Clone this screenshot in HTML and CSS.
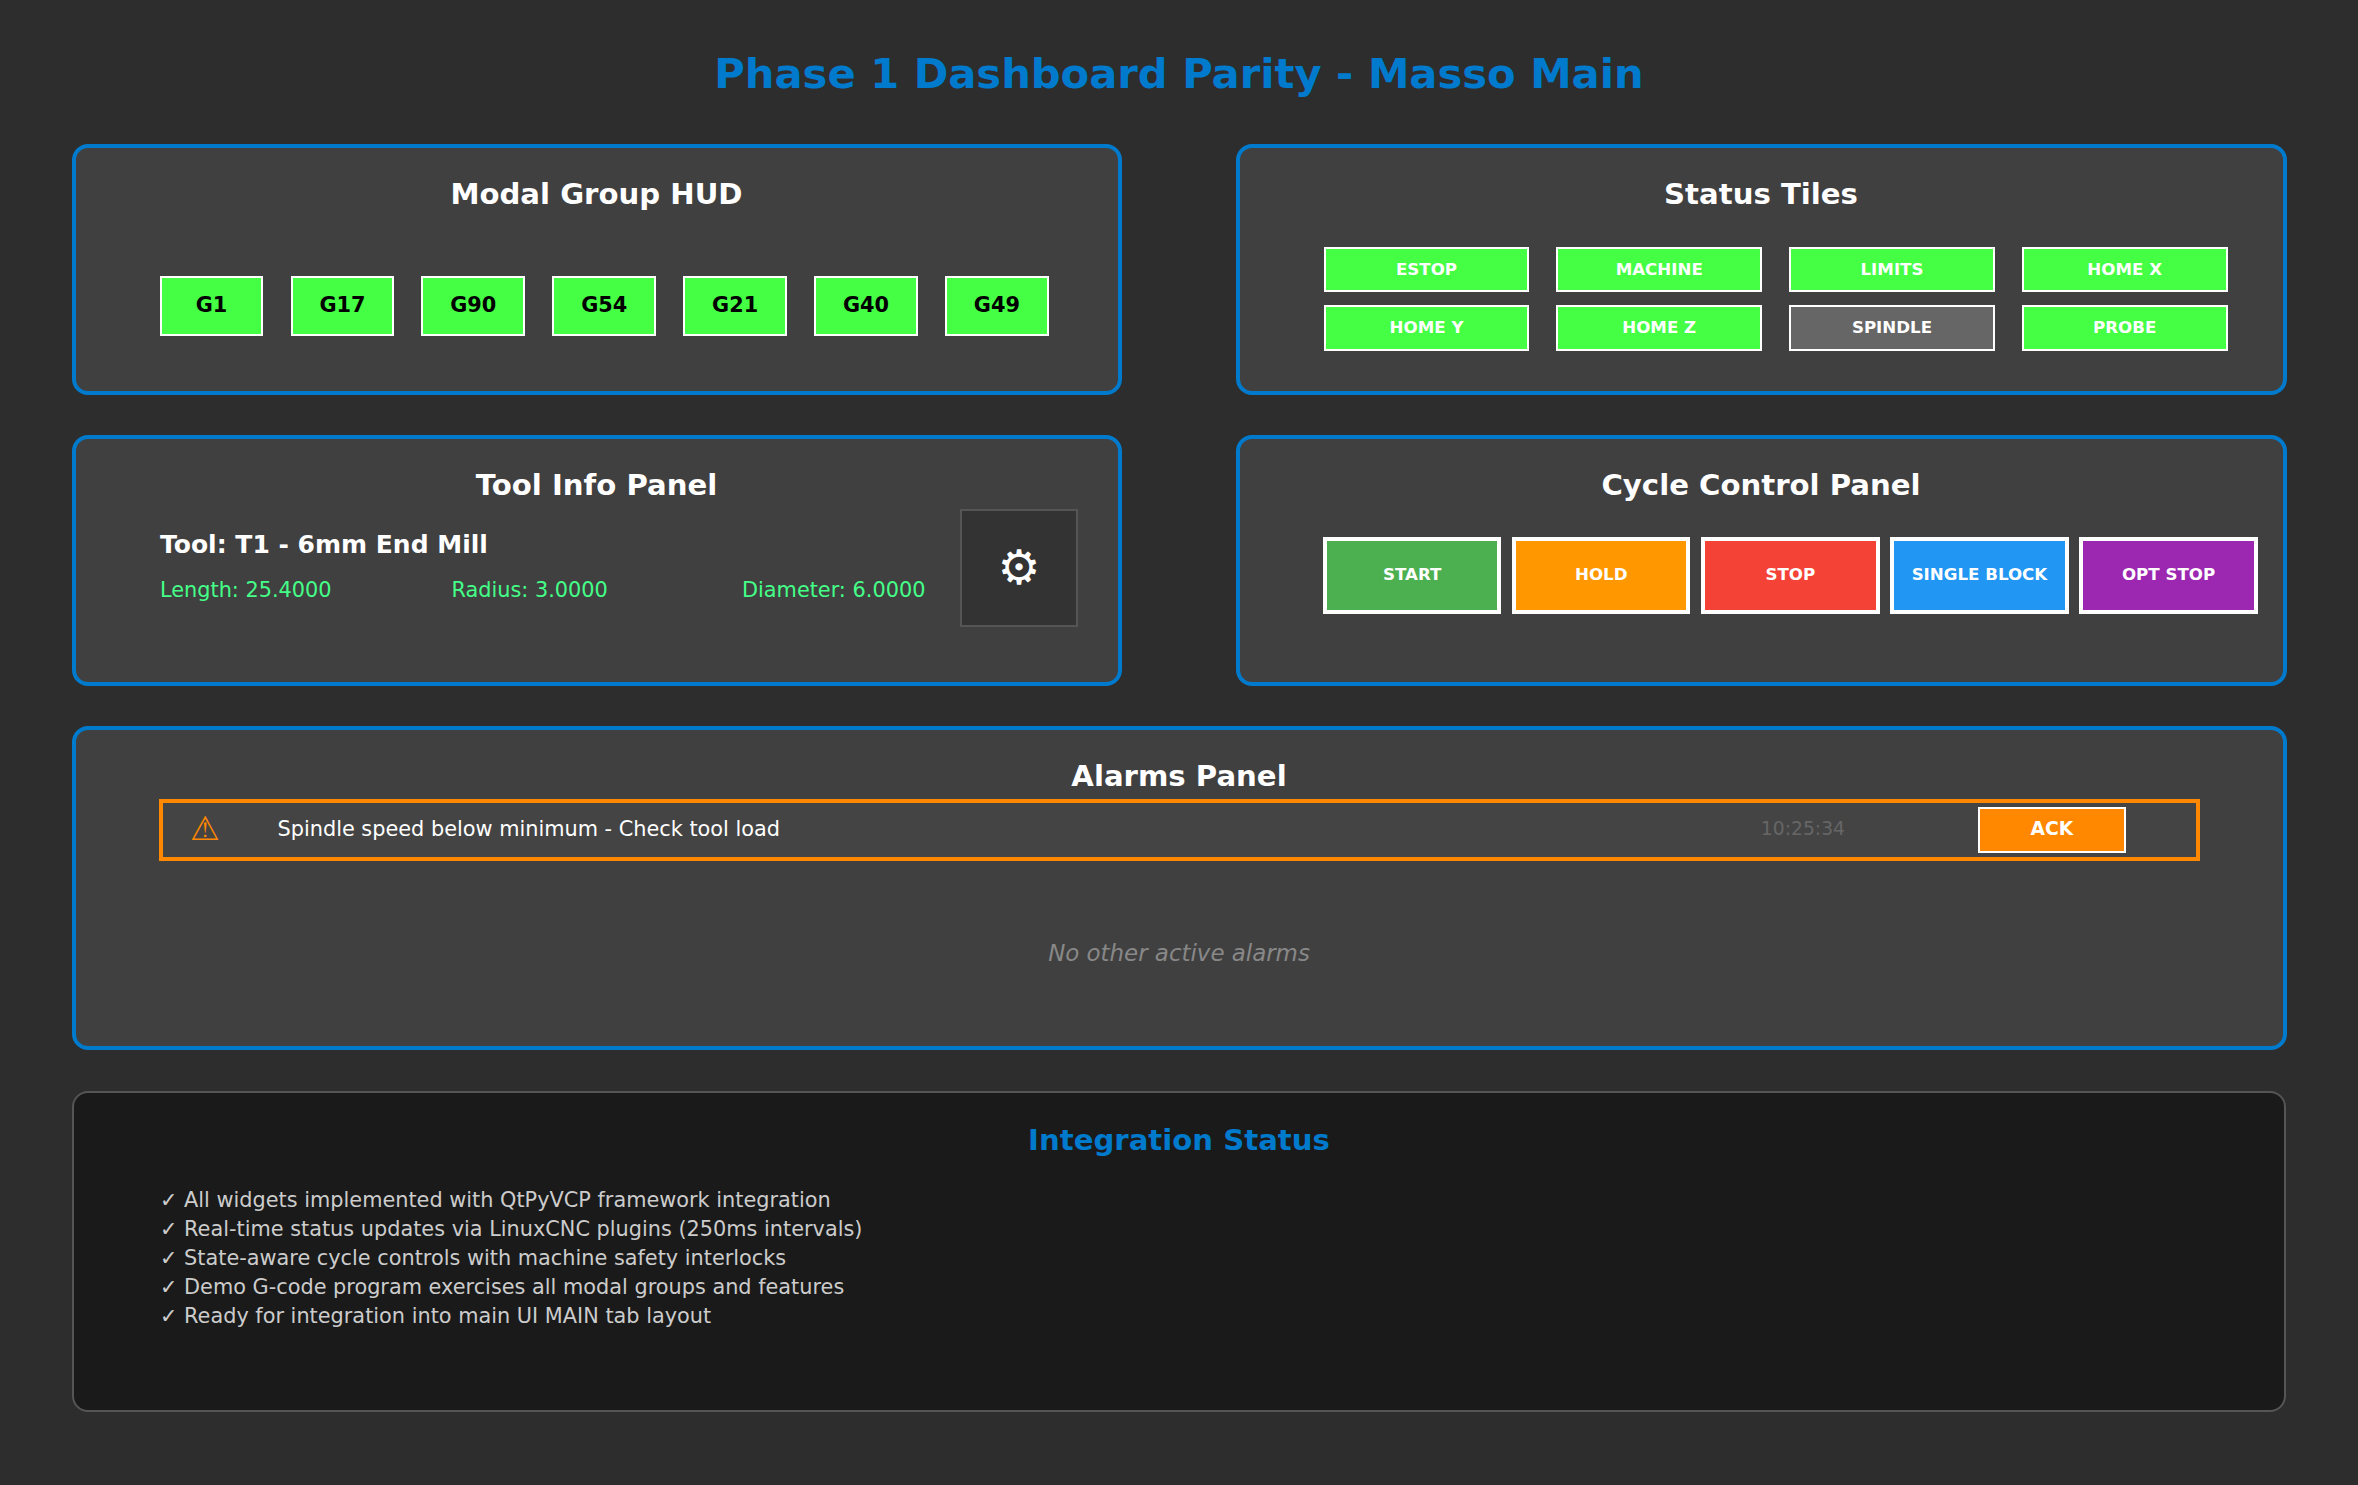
FILE: index.html
```html
<!DOCTYPE html>
<html lang="en">
<head>
<meta charset="utf-8">
<title>Phase 1 Dashboard Parity - Masso Main</title>
<link rel="stylesheet" href="styles.css">
</head>
<body>
<h1 class="page-title">Phase 1 Dashboard Parity - Masso Main</h1>
<main class="dashboard">
  <section class="panel">
    <h2 class="panel-title">Modal Group HUD</h2>
    <div class="modal-groups">
      <div class="code">G1</div>
      <div class="code">G17</div>
      <div class="code">G90</div>
      <div class="code">G54</div>
      <div class="code">G21</div>
      <div class="code">G40</div>
      <div class="code">G49</div>
    </div>
  </section>

  <section class="panel">
    <h2 class="panel-title">Status Tiles</h2>
    <div class="tiles">
      <div class="tile">ESTOP</div>
      <div class="tile">MACHINE</div>
      <div class="tile">LIMITS</div>
      <div class="tile">HOME X</div>
      <div class="tile">HOME Y</div>
      <div class="tile">HOME Z</div>
      <div class="tile tile-off">SPINDLE</div>
      <div class="tile">PROBE</div>
    </div>
  </section>

  <section class="panel">
    <h2 class="panel-title">Tool Info Panel</h2>
    <div class="tool">
      <div class="tool-info">
        <div class="tool-name">Tool: T1 - 6mm End Mill</div>
        <div class="tool-values">
          <span>Length: 25.4000</span>
          <span>Radius: 3.0000</span>
          <span>Diameter: 6.0000</span>
        </div>
      </div>
      <div class="tool-icon"><span class="gear">⚙</span></div>
    </div>
  </section>

  <section class="panel">
    <h2 class="panel-title">Cycle Control Panel</h2>
    <div class="cycle">
      <button class="cycle-btn start">START</button>
      <button class="cycle-btn hold">HOLD</button>
      <button class="cycle-btn stop">STOP</button>
      <button class="cycle-btn single">SINGLE BLOCK</button>
      <button class="cycle-btn opt">OPT STOP</button>
    </div>
  </section>

  <section class="panel wide">
    <h2 class="panel-title">Alarms Panel</h2>
    <div class="alarm">
      <span class="alarm-icon">⚠</span>
      <span class="alarm-text">Spindle speed below minimum - Check tool load</span>
      <span class="alarm-time">10:25:34</span>
      <button class="ack">ACK</button>
    </div>
    <p class="no-alarms">No other active alarms</p>
  </section>

  <section class="panel wide integration">
    <h2 class="panel-title">Integration Status</h2>
    <ul class="checks">
      <li>✓ All widgets implemented with QtPyVCP framework integration</li>
      <li>✓ Real-time status updates via LinuxCNC plugins (250ms intervals)</li>
      <li>✓ State-aware cycle controls with machine safety interlocks</li>
      <li>✓ Demo G-code program exercises all modal groups and features</li>
      <li>✓ Ready for integration into main UI MAIN tab layout</li>
    </ul>
  </section>
</main>
</body>
</html>
```
FILE: styles.css
```css
* {
  box-sizing: border-box;
}

body {
  margin: 0;
  height: 1485px;
  overflow: hidden;
  background: #2d2d2d;
  color: #fff;
  font-family: "DejaVu Sans", sans-serif;
  white-space: nowrap;
}

button {
  margin: 0;
  padding: 0;
  color: inherit;
  font-family: inherit;
}

.page-title {
  margin: 0;
  padding-top: 49px;
  height: 144px;
  color: #007acc;
  font-size: 41.67px;
  line-height: 50px;
  text-align: center;
}

.dashboard {
  display: grid;
  grid-template-columns: 1050px 1051px;
  grid-template-rows: 251px 251px 324px 322px;
  column-gap: 114px;
  row-gap: 40px;
  padding-left: 72px;
}

.panel {
  padding: 29px 0 0 84px;
  border: 4px solid #007acc;
  border-radius: 16px;
  background: #404040;
}

.wide {
  grid-column: span 2;
}

.panel-title {
  margin: 0 1px 0 -84px;
  font-size: 29.17px;
  line-height: 34px;
  text-align: center;
}

.modal-groups {
  display: grid;
  grid-template-columns: repeat(7, 103.85px);
  column-gap: 27.05px;
  margin: 65px 0 0 -0.4px;
}

.code {
  height: 60px;
  border: 2px solid #fff;
  background: #44ff44;
  color: #000;
  font-size: 20.83px;
  font-weight: bold;
  line-height: 54px;
  text-align: center;
}

.tiles {
  display: grid;
  grid-template-columns: repeat(4, 205.8px);
  grid-template-rows: 45px 46px;
  gap: 13px 26.95px;
  margin: 36px 0 0 -0.4px;
}

.tile {
  border: 2px solid #fff;
  background: #44ff44;
  font-size: 16.67px;
  font-weight: bold;
  line-height: 41px;
  text-align: center;
}

.tile-off {
  background: #666;
}

.tool {
  display: flex;
  justify-content: space-between;
  padding: 7px 40px 0 0;
}

.tool-info {
  padding-top: 20px;
}

.tool-name {
  font-size: 25px;
  font-weight: bold;
  line-height: 31px;
}

.tool-values {
  display: grid;
  grid-template-columns: 291.5px 290.5px auto;
  margin-top: 18px;
  color: #44ff88;
  font-size: 20.83px;
  line-height: 24px;
}

.tool-icon {
  display: flex;
  align-items: center;
  justify-content: center;
  width: 118px;
  height: 118px;
  padding-bottom: 2px;
  border: 2px solid #555;
  background: #333;
}

.gear {
  font-size: 48px;
  line-height: 50px;
}

.cycle {
  display: flex;
  gap: 10.7px;
  margin: 35px 0 0 -1px;
}

.cycle-btn {
  width: 178.4px;
  height: 77px;
  padding-bottom: 2px;
  border: 4px solid #fff;
  font-size: 16.67px;
  font-weight: bold;
}

.start { background: #4caf50; }
.hold { background: #ff9800; }
.stop { background: #f44336; }
.single { background: #2196f3; }
.opt { background: #9c27b0; }

.alarm {
  display: flex;
  align-items: center;
  width: 2041px;
  height: 62px;
  margin: 6px 0 0 -1px;
  padding: 0 70px 0 27px;
  border: 4px solid #ff8800;
  background: #444;
}

.alarm-icon {
  width: 87.5px;
  margin-bottom: 2px;
  color: #ff8800;
  font-size: 33.33px;
  line-height: 40px;
}

.alarm-text {
  margin-bottom: 2px;
  font-size: 20.83px;
  line-height: 24px;
}

.alarm-time {
  margin: 0 133px 2px auto;
  color: #666;
  font-size: 18.75px;
  line-height: 22px;
}

.ack {
  width: 148px;
  height: 46px;
  padding-bottom: 3px;
  border: 2px solid #fff;
  background: #ff8800;
  font-size: 18.75px;
  font-weight: bold;
}

.no-alarms {
  margin: 78px 1px 0 -84px;
  color: #888;
  font-size: 22.92px;
  font-style: italic;
  line-height: 28px;
  text-align: center;
}

.integration {
  margin: 1px 1px 0 0;
  height: 321px;
  padding: 30px 0 0 86px;
  border: 2px solid #555;
  background: #1a1a1a;
}

.integration .panel-title {
  margin: 0 0 0 -86px;
  color: #007acc;
}

.checks {
  margin: 29px 0 0;
  padding: 0;
  color: #ccc;
  font-size: 20.83px;
  line-height: 29px;
  list-style: none;
}
```
